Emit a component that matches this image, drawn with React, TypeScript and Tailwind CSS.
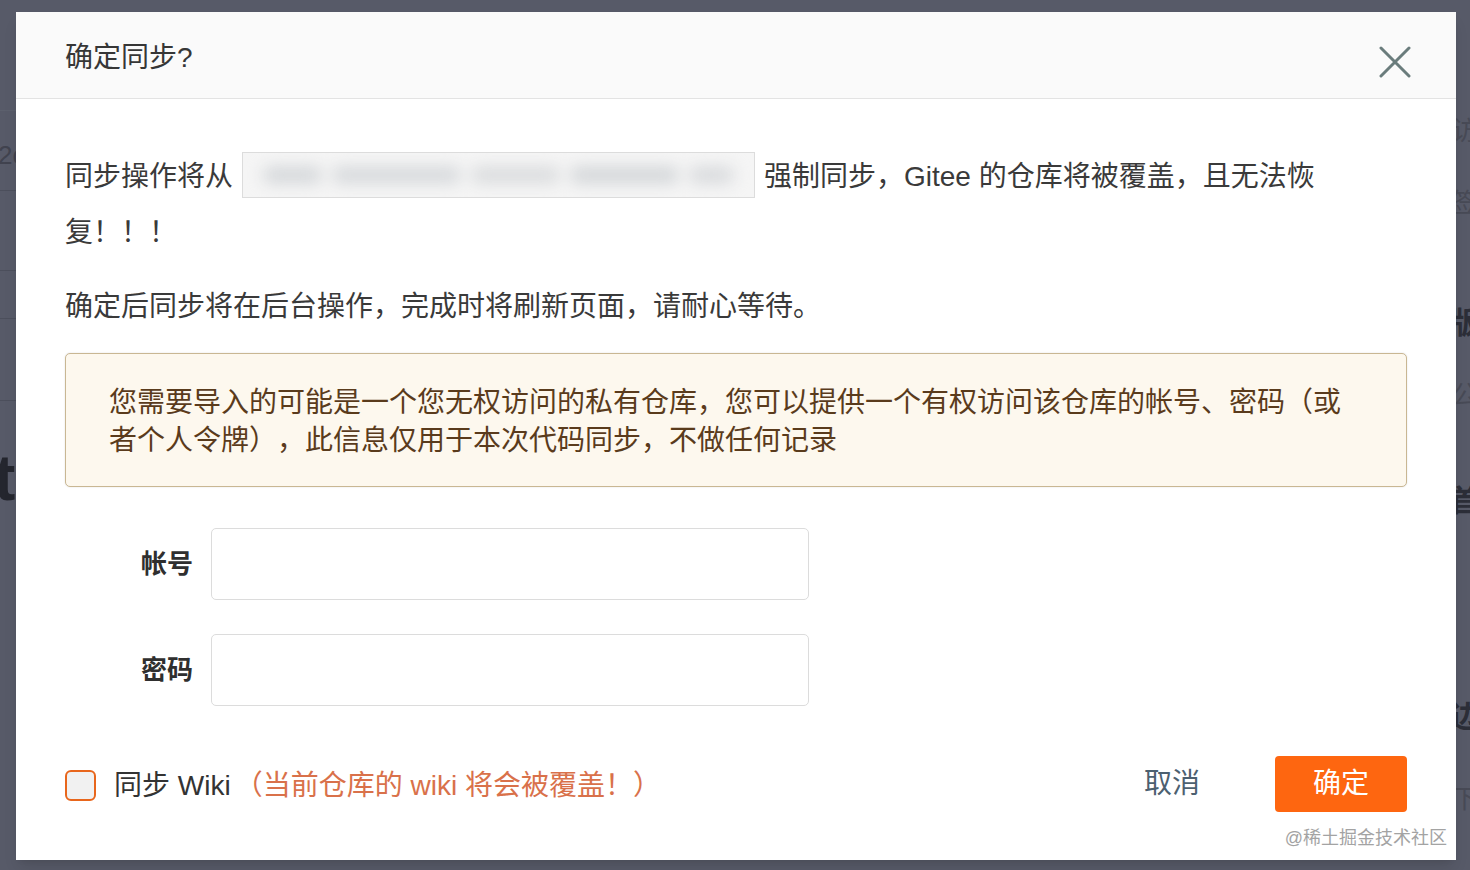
import React from 'react';

const font = { fontFamily: '"Liberation Sans", "Noto Sans CJK SC", sans-serif' };

function Backdrop() {
  return (
    <div className="absolute inset-0 bg-[#575a68] text-[#3b3d49]">
      {/* left page fragments */}
      <div className="absolute left-0 top-[110px] w-[16px] border-t border-[#62657280]" />
      <div className="absolute left-0 top-[190px] w-[16px] border-t border-[#4c4f5c]" />
      <div className="absolute left-0 top-[270px] w-[16px] border-t border-[#4c4f5c]" />
      <div className="absolute left-0 top-[318px] w-[16px] border-t border-[#4c4f5c]" />
      <div className="absolute left-0 top-[400px] w-[16px] border-t border-[#4c4f5c]" />
      <div className="absolute left-[-2px] top-[136px] text-[26px] text-[#41434f]">2c</div>
      <div className="absolute left-[-6px] top-[430px] text-[64px] font-bold text-[#24262e]">t</div>
      {/* right page fragments */}
      <div className="absolute left-[1452px] top-[112px] text-[26px] text-[#484a56]">访</div>
      <div className="absolute left-[1452px] top-[184px] text-[26px] text-[#484a56]">签</div>
      <div className="absolute left-[1450px] top-[300px] text-[30px] font-bold text-[#2c2e38]">版</div>
      <div className="absolute left-[1452px] top-[376px] text-[26px] text-[#484a56]">公</div>
      <div className="absolute left-[1450px] top-[478px] text-[30px] font-bold text-[#2c2e38]">首</div>
      <div className="absolute left-[1450px] top-[694px] text-[30px] font-bold text-[#2c2e38]">边</div>
      <div className="absolute left-[1452px] top-[780px] text-[26px] text-[#484a56]">下</div>
    </div>
  );
}

export default function App() {
  return (
    <div className="relative w-full h-[870px] overflow-hidden [text-spacing-trim:space-all]" style={font}>
      <Backdrop />

      {/* Modal */}
      <div className="absolute left-[16px] top-[12px] w-[1440px] h-[848px] bg-white shadow-lg flex flex-col">
        <div className="h-[87px] shrink-0 bg-[#fafafa] border-b border-[#e3e3e3] flex items-center justify-between pl-[49px] pr-[44px]">
          <h2 className="text-[28px] text-[#363636] leading-none mt-[5px]">确定同步?</h2>
          <button className="w-[34px] h-[34px] flex items-center justify-center text-[#6a7c7c] mt-[14px]">
            <svg width="32" height="32" viewBox="0 0 32 32" fill="none" stroke="currentColor" strokeWidth="3" strokeLinecap="round">
              <path d="M2 2 L30 30 M30 2 L2 30" />
            </svg>
          </button>
        </div>

        <div className="flex-1 px-[49px] pt-[50px] pb-[48px] text-[28px] text-[#3a3a3a] flex flex-col">
          <p className="leading-[56px]">
            同步操作将从
            <span className="inline-block align-middle mx-[9px] -mt-[8px] w-[513px] h-[46px] border border-[#dcdcdc] bg-[#f5f5f5] overflow-hidden">
              <span className="flex items-center gap-[10px] h-full px-[20px] blur-[8px]">
                <span className="h-[16px] w-[60px] rounded-full bg-[#d2d5d8]" />
                <span className="h-[16px] w-[130px] rounded-full bg-[#d4d7da]" />
                <span className="h-[16px] w-[90px] rounded-full bg-[#d8dadc]" />
                <span className="h-[16px] w-[110px] rounded-full bg-[#d1d4d7]" />
                <span className="h-[16px] w-[45px] rounded-full bg-[#d6d8db]" />
              </span>
            </span>
            强制同步，Gitee 的仓库将被覆盖，且无法恢
            <br />
            复！！！
          </p>
          <p className="leading-[56px] mt-[18px]">确定后同步将在后台操作，完成时将刷新页面，请耐心等待。</p>

          <div className="mt-[18px] bg-[#fdf8ee] border border-[#c9b793] rounded-[5px] pl-[43px] pr-[50px] pt-[30px] pb-[26px] text-[#5a3b1c] leading-[38px] shadow-[0_0_2px_rgba(0,0,0,0.12)]">
            您需要导入的可能是一个您无权访问的私有仓库，您可以提供一个有权访问该仓库的帐号、密码（或者个人令牌），此信息仅用于本次代码同步，不做任何记录
          </div>

          <div className="mt-[41px] flex flex-col gap-[34px]">
            <div className="flex items-center">
              <label className="w-[128px] text-right text-[26px] font-bold text-[#2f2f2f] leading-none">帐号</label>
              <input className="ml-[18px] w-[598px] h-[72px] border border-[#dcdcdc] rounded-[5px] outline-none px-4" />
            </div>
            <div className="flex items-center">
              <label className="w-[128px] text-right text-[26px] font-bold text-[#2f2f2f] leading-none">密码</label>
              <input type="password" className="ml-[18px] w-[598px] h-[72px] border border-[#dcdcdc] rounded-[5px] outline-none px-4" />
            </div>
          </div>

          <div className="mt-auto flex items-center justify-between">
            <div className="flex items-center pt-[3px]">
              <span className="w-[31px] h-[31px] rounded-[6px] border-2 border-[#e8661c] bg-[#f1f1f1]" />
              <span className="ml-[18px] text-[#333]">同步 Wiki</span>
              <span className="ml-[4px] text-[#d9714a]">（当前仓库的 wiki 将会被覆盖！）</span>
            </div>
            <div className="flex items-center">
              <button className="px-[25px] text-[#4c6070]">取消</button>
              <button className="ml-[50px] w-[132px] h-[56px] rounded-[4px] bg-[#fe6610] text-white">确定</button>
            </div>
          </div>
        </div>

        <div className="absolute right-[9px] bottom-[13px] text-[18px] text-[#a3a3a3] leading-none">@稀土掘金技术社区</div>
      </div>
    </div>
  );
}
